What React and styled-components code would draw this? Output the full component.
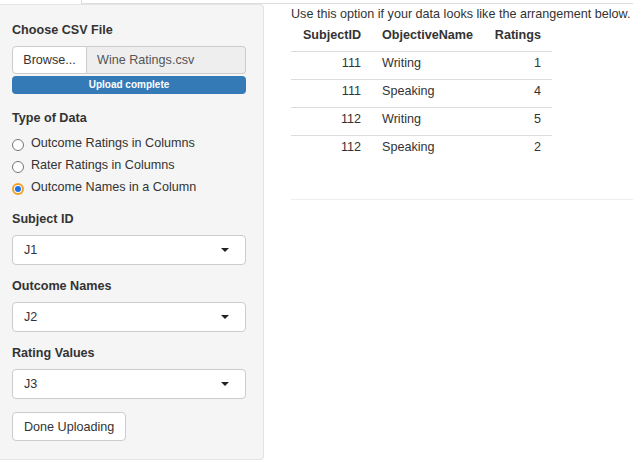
import styled, { createGlobalStyle } from "styled-components";

const GlobalStyle = createGlobalStyle`
  html, body {
    margin: 0;
    padding: 0;
    background: #ffffff;
    overflow: hidden;
  }
  body {
    font-family: "Liberation Sans", Arial, sans-serif;
    font-size: 12.6px;
    line-height: 18px;
    color: #333333;
  }
`;

const Page = styled.div`
  width: 633px;
  height: 464px;
  display: flex;
  flex-direction: column;
`;

const TabStrip = styled.div`
  display: flex;
  height: 4px;
`;

const ActiveTab = styled.div`
  width: 81px;
  border-right: 1px solid #dddddd;
  background: #ffffff;
`;

const TabFiller = styled.div`
  flex: 1;
  border-bottom: 1px solid #dddddd;
`;

const Columns = styled.div`
  display: flex;
  align-items: flex-start;
`;

const Well = styled.div`
  width: 234px;
  flex-shrink: 0;
  padding: 16px 17px 18px 12px;
  background: #f5f5f5;
  border: 1px solid #e3e3e3;
  border-left: none;
  border-radius: 0 4px 4px 0;
  display: flex;
  flex-direction: column;
`;

const Label = styled.div`
  font-weight: bold;
  line-height: 18px;
  margin-bottom: ${(p) => (p.$gap === undefined ? 7 : p.$gap)}px;
  margin-top: ${(p) => p.$top || 0}px;
`;

const InputGroup = styled.div`
  display: flex;
  height: 28px;
`;

const BrowseButton = styled.div`
  width: 75px;
  display: flex;
  align-items: center;
  justify-content: center;
  background: #ffffff;
  border: 1px solid #cccccc;
  border-radius: 4px 0 0 4px;
  box-sizing: border-box;
`;

const FileName = styled.div`
  flex: 1;
  display: flex;
  align-items: center;
  padding-left: 10px;
  background: #eeeeee;
  color: #555555;
  border: 1px solid #cccccc;
  border-left: none;
  border-radius: 0 4px 4px 0;
`;

const Progress = styled.div`
  margin-top: 2px;
  height: 18px;
  border-radius: 4px;
  background: #337ab7;
  color: #ffffff;
  font-size: 10px;
  font-weight: bold;
  display: flex;
  align-items: center;
  justify-content: center;
`;

const RadioGroup = styled.div`
  display: flex;
  flex-direction: column;
  margin-top: 5px;
`;

const RadioRow = styled.div`
  height: 22px;
  display: flex;
  align-items: center;
  gap: 7px;
`;

const RadioDot = styled.span`
  width: 12px;
  height: 12px;
  margin-top: 3px;
  box-sizing: border-box;
  border-radius: 50%;
  background: #ffffff;
  border: ${(p) => (p.$checked ? "2px solid #f0a12a" : "1px solid #767676")};
  display: flex;
  align-items: center;
  justify-content: center;

  &::after {
    content: "";
    display: ${(p) => (p.$checked ? "block" : "none")};
    width: 6px;
    height: 6px;
    border-radius: 50%;
    background: #1a73e8;
  }
`;

const Select = styled.div`
  height: 30px;
  box-sizing: border-box;
  border: 1px solid #cccccc;
  border-radius: 4px;
  background: #ffffff;
  display: flex;
  align-items: center;
  justify-content: space-between;
  padding: 0 16px 0 11px;
  margin-bottom: 12px;
`;

const Caret = styled.span`
  width: 0;
  height: 0;
  border-left: 4px solid transparent;
  border-right: 4px solid transparent;
  border-top: 4px solid #222222;
`;

const Button = styled.div`
  align-self: flex-start;
  margin-top: 1px;
  height: 29px;
  box-sizing: border-box;
  padding: 0 11px;
  display: flex;
  align-items: center;
  background: #ffffff;
  border: 1px solid #cccccc;
  border-radius: 4px;
`;

const Main = styled.div`
  flex: 1;
  margin-left: 27px;
  padding-top: 1px;
  white-space: nowrap;
`;

const Intro = styled.div`
  line-height: 18px;
`;

const Table = styled.table`
  border-collapse: collapse;
  table-layout: fixed;
  width: 261px;
`;

const Th = styled.th`
  font-weight: bold;
  text-align: ${(p) => p.$align || "left"};
  padding: 3px ${(p) => p.$pr || 8}px 7px 8px;
  line-height: 18px;
`;

const Td = styled.td`
  text-align: ${(p) => p.$align || "left"};
  border-top: 1px solid #dddddd;
  padding: 2px ${(p) => p.$pr || 8}px 7px 8px;
  line-height: 18px;
`;

const Rule = styled.hr`
  margin: 36px 0 0 0;
  border: none;
  border-top: 1px solid #eeeeee;
`;

const radios = [
  { text: "Outcome Ratings in Columns", checked: false },
  { text: "Rater Ratings in Columns", checked: false },
  { text: "Outcome Names in a Column", checked: true },
];

const selects = [
  { label: "Subject ID", value: "J1", top: 12 },
  { label: "Outcome Names", value: "J2", top: 0 },
  { label: "Rating Values", value: "J3", top: 0 },
];

const rows = [
  ["111", "Writing", "1"],
  ["111", "Speaking", "4"],
  ["112", "Writing", "5"],
  ["112", "Speaking", "2"],
];

export default function App() {
  return (
    <Page>
      <GlobalStyle />
      <TabStrip>
        <ActiveTab />
        <TabFiller />
      </TabStrip>
      <Columns>
        <Well>
          <Label>Choose CSV File</Label>
          <InputGroup>
            <BrowseButton>Browse...</BrowseButton>
            <FileName>Wine Ratings.csv</FileName>
          </InputGroup>
          <Progress>Upload complete</Progress>

          <Label $top={15} $gap={0}>
            Type of Data
          </Label>
          <RadioGroup>
            {radios.map((r) => (
              <RadioRow key={r.text}>
                <RadioDot $checked={r.checked} />
                {r.text}
              </RadioRow>
            ))}
          </RadioGroup>

          {selects.map((s) => (
            <div key={s.label}>
              <Label $top={s.top}>{s.label}</Label>
              <Select>
                {s.value}
                <Caret />
              </Select>
            </div>
          ))}
          <Button>Done Uploading</Button>
        </Well>

        <Main>
          <Intro>Use this option if your data looks like the arrangement below.</Intro>
          <Table>
            <colgroup>
              <col style={{ width: "83px" }} />
              <col style={{ width: "111px" }} />
              <col style={{ width: "67px" }} />
            </colgroup>
            <thead>
              <tr>
                <Th $align="right" $pr={13}>
                  SubjectID
                </Th>
                <Th>ObjectiveName</Th>
                <Th $align="right" $pr={11}>
                  Ratings
                </Th>
              </tr>
            </thead>
            <tbody>
              {rows.map((r, i) => (
                <tr key={i}>
                  <Td $align="right" $pr={13}>
                    {r[0]}
                  </Td>
                  <Td>{r[1]}</Td>
                  <Td $align="right" $pr={11}>
                    {r[2]}
                  </Td>
                </tr>
              ))}
            </tbody>
          </Table>
          <Rule />
        </Main>
      </Columns>
    </Page>
  );
}
